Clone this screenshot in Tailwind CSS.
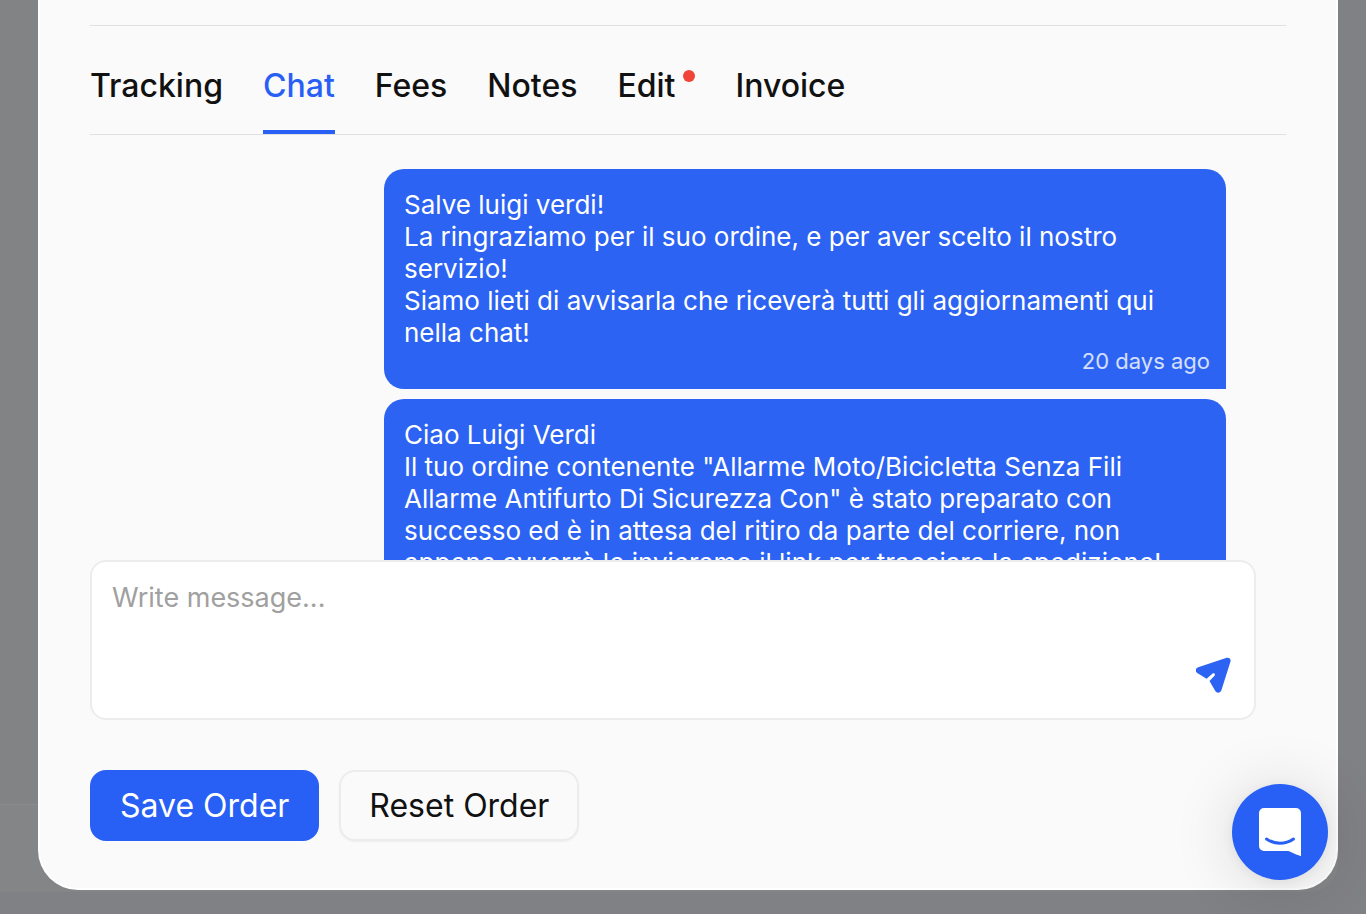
<!DOCTYPE html>
<html lang="en">
  <head>
    <meta charset="UTF-8" />
    <meta name="viewport" content="width=device-width, initial-scale=1.0" />
    <title>Order chat</title>
    <script src="https://cdn.jsdelivr.net/npm/@tailwindcss/browser@4"></script>
  </head>
  <body
    class="relative flex h-screen flex-col overflow-hidden bg-[#808185] pr-7 pb-6 pl-[38px] font-['Inter',sans-serif] text-[#111111]"
  >
    <!-- dimmed page behind the dialog -->
    <div
      class="absolute top-0 right-7 bottom-[22px] left-0 flex flex-col justify-end rounded-br-[28px] bg-[#828385]"
    >
      <div class="h-22 rounded-br-[28px] border-t border-[#8a8b8c] bg-[#848586]"></div>
    </div>

    <main
      class="relative flex min-h-0 flex-1 flex-col rounded-b-[40px] border-2 border-t-0 border-white bg-[#fafafa] px-[50px] pt-[25px] pb-[47px]"
    >
      <nav
        class="flex h-[110px] shrink-0 gap-10 border-y border-[#e0e0e0] text-[32px] leading-10 font-medium"
      >
        <a href="#tracking" class="pt-10">Tracking</a>
        <a
          href="#chat"
          aria-current="page"
          class="border-b-4 border-[#285ff5] pt-10 text-[#285ff5]"
          >Chat</a
        >
        <a href="#fees" class="pt-10">Fees</a>
        <a href="#notes" class="pt-10">Notes</a>
        <a href="#edit" class="flex gap-2 pt-10"
          >Edit <span class="mt-1 size-3 rounded-full bg-[#f04438]"></span
        ></a>
        <a href="#invoice" class="pt-10">Invoice</a>
      </nav>

      <section
        class="flex min-h-0 flex-1 flex-col items-end gap-2.5 overflow-hidden pt-[34px] pr-15 text-[26px] leading-8 text-white"
      >
        <article
          class="w-full max-w-[842px] shrink-0 rounded-[20px] rounded-br-none bg-[#2c63f3] pt-5 pr-4 pb-4 pl-5"
        >
          <p>Salve luigi verdi!</p>
          <p>
            La ringraziamo per il suo ordine, e per aver scelto il nostro
            servizio!
          </p>
          <p>
            Siamo lieti di avvisarla che riceverà tutti gli aggiornamenti qui
            nella chat!
          </p>
          <time class="block text-right text-[22px] leading-6 text-white/80"
            >20 days ago</time
          >
        </article>
        <article
          class="w-full max-w-[842px] shrink-0 rounded-[20px] rounded-br-none bg-[#2c63f3] pt-5 pr-4 pb-4 pl-5"
        >
          <p>Ciao Luigi Verdi</p>
          <p>
            Il tuo ordine contenente "Allarme Moto/Bicicletta Senza Fili
            Allarme Antifurto Di Sicurezza Con" è stato preparato con successo
            ed è in attesa del ritiro da parte del corriere, non appena avverrà
            le invieremo il link per tracciare la spedizione!
          </p>
        </article>
      </section>

      <form class="relative mr-[30px] shrink-0">
        <textarea
          aria-label="Message"
          placeholder="Write message..."
          class="block h-40 w-full resize-none rounded-2xl border-2 border-[#ececec] bg-white px-5 py-5 text-[27px] leading-8 placeholder:text-[#a0a0a0] focus:outline-none"
        ></textarea>
        <button
          type="submit"
          aria-label="Send"
          class="absolute right-6 bottom-[27px] text-[#2c63f3]"
        >
          <svg class="size-9" viewBox="0 0 36 36" fill="currentColor">
            <path
              d="M2.200 10.300 30.700.8c2.400-.7 4.500 1.200 3.800 3.700L25.400 33.300c-1.100 3-4.600 3.200-6.100.7L13.500 24l5-5.200c1.200-1.700-.5-3.200-2.200-2L10.600 21.700 1.200 16c-2.600-1.600-2-4.700 1-5.700Z"
            />
          </svg>
        </button>
      </form>

      <div class="mt-[50px] flex shrink-0 gap-5 text-[32px] leading-10">
        <button
          type="button"
          class="h-[71px] rounded-2xl bg-[#285ff5] px-[30px] text-white"
        >
          Save Order
        </button>
        <button
          type="button"
          class="h-[71px] rounded-2xl border-2 border-[#ececec] px-7 shadow-xs"
        >
          Reset Order
        </button>
      </div>
    </main>

    <button
      type="button"
      aria-label="Open messenger"
      class="absolute right-[38px] bottom-[34px] flex size-24 items-center justify-center rounded-full bg-[#285ff5] text-white shadow-[0_2px_12px_rgba(0,0,0,0.06),0_4px_64px_rgba(0,0,0,0.14)]"
    >
      <svg class="h-12 w-[42px]" viewBox="0 0 42 48" fill="none">
        <path
          d="M5 0h32a5 5 0 0 1 5 5v43s-6.600-1.900-12.500-5H5a5 5 0 0 1-5-5V5a5 5 0 0 1 5-5Z"
          fill="currentColor"
        />
        <path
          d="M7.500 31c8 5.600 19 5.600 27 0"
          stroke="#285ff5"
          stroke-width="3"
          stroke-linecap="round"
        />
      </svg>
    </button>
  </body>
</html>
